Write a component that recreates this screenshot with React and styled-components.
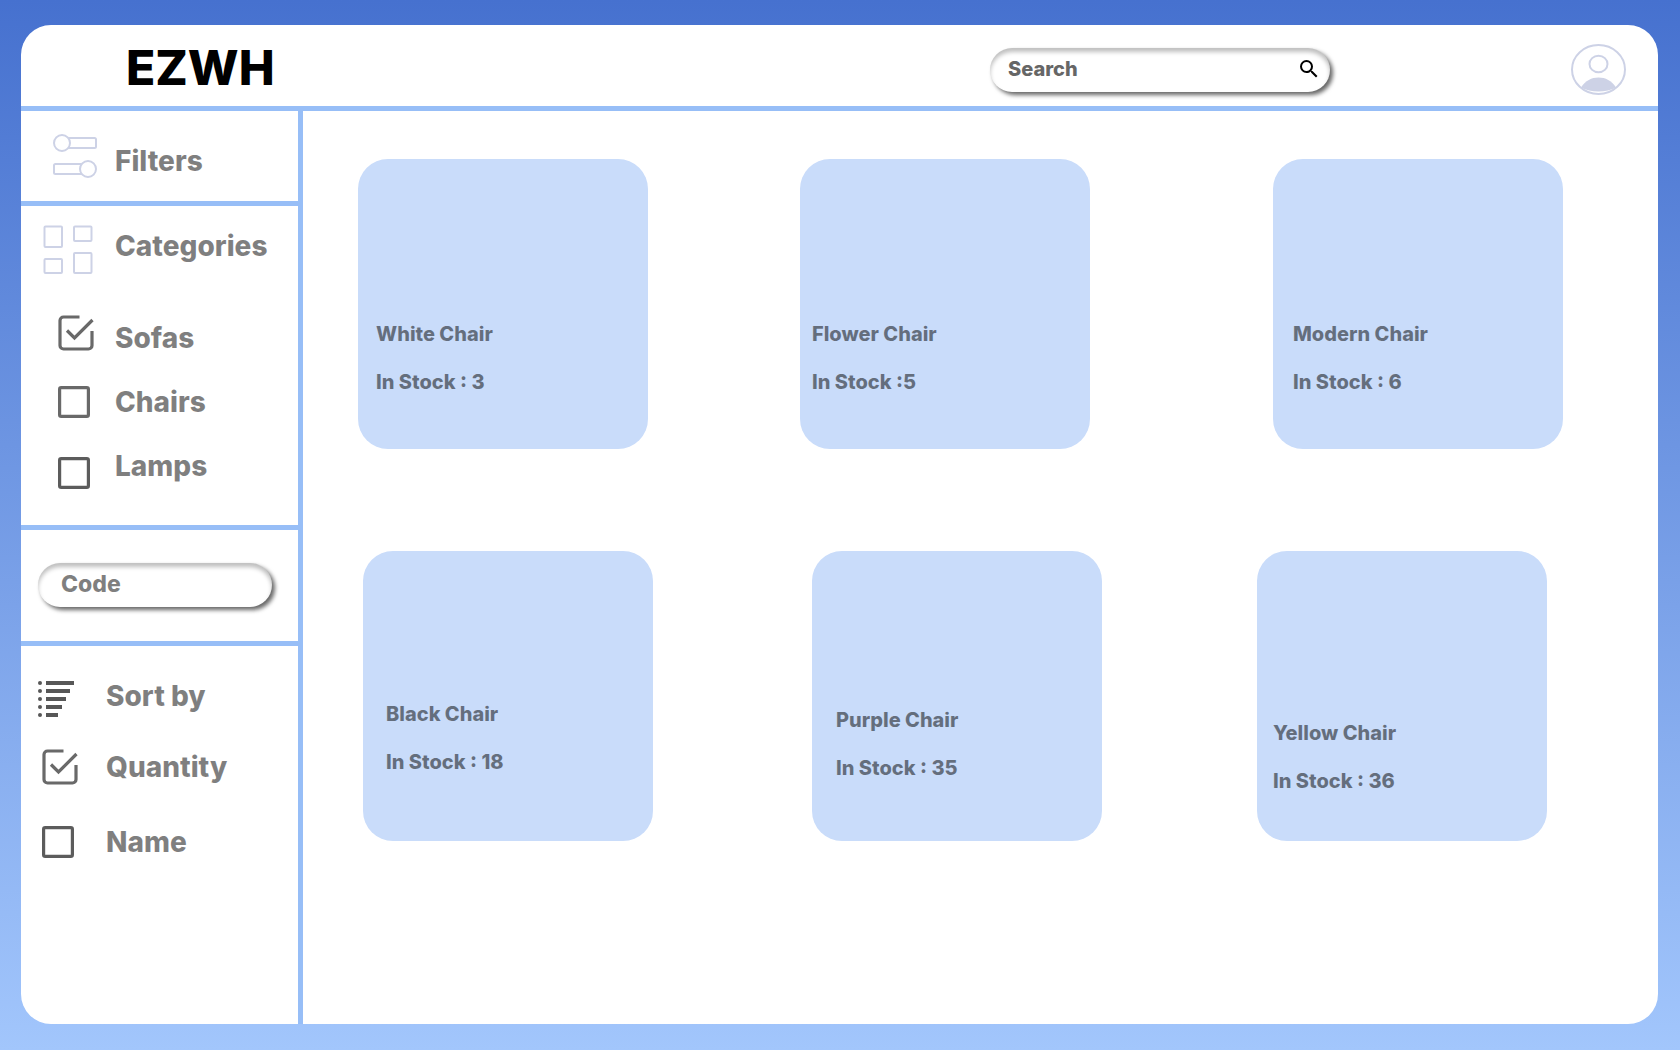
import React, { useState } from "react";
import styled, { createGlobalStyle } from "styled-components";

const GlobalStyle = createGlobalStyle`
  *, *::before, *::after { box-sizing: border-box; }
  body { margin: 0; font-family: Inter, "Liberation Sans", sans-serif; }
  h1, h2, h3, p, ul { margin: 0; padding: 0; }
  ul { list-style: none; }
`;

const line = "#97bef7";
const outline = "#cdd2e6";
const muted = "rgba(0, 0, 0, 0.5)";

const Page = styled.div`
  display: flex;
  min-height: 100vh;
  padding: 25px 22px 26px 21px;
  background: linear-gradient(180deg, #4671cf 0%, #a2c6fc 100%);
`;

const Panel = styled.div`
  flex: 1;
  display: flex;
  flex-direction: column;
  overflow: hidden;
  border-radius: 30px;
  background: #fff;
`;

const Header = styled.header`
  display: grid;
  grid-template-columns: 1fr 340px 296px;
  align-items: center;
  height: 86px;
  padding: 8px 32px 0 105px;
  border-bottom: 5px solid ${line};
`;

const Logo = styled.h1`
  padding-bottom: 4px;
  font-size: 48px;
  line-height: 58px;
  font-weight: 800;
  color: #000;
`;

const Pill = styled.div`
  display: flex;
  align-items: center;
  height: 44px;
  padding: 0 9px 2px ${(p) => p.$inset}px;
  border-radius: 22px;
  background: #fff;
  box-shadow: 3px 3px 4px rgba(0, 0, 0, 0.6),
    inset 0 4px 4px rgba(0, 0, 0, 0.25);
`;

const TextInput = styled.input`
  flex: 1;
  min-width: 0;
  padding: 0;
  border: 0;
  outline: 0;
  background: transparent;
  font: 800 ${(p) => p.$size}px / 28px Inter, "Liberation Sans", sans-serif;
  color: ${(p) => p.$color};

  &::placeholder {
    color: inherit;
    opacity: 1;
  }
`;

const IconButton = styled.button`
  display: flex;
  padding: 0;
  border: 0;
  background: none;
  color: #000;
  cursor: pointer;
`;

const AvatarButton = styled(IconButton)`
  justify-self: end;
`;

const Body = styled.div`
  flex: 1;
  display: flex;
`;

const Sidebar = styled.aside`
  flex: none;
  width: 282px;
  border-right: 5px solid ${line};
`;

const Section = styled.section`
  padding: ${(p) => p.$pad};
  border-bottom: ${(p) => (p.$last ? "0" : `5px solid ${line}`)};
`;

const Heading = styled.div`
  display: flex;
  height: ${(p) => p.$height}px;
`;

const IconCell = styled.span`
  flex: none;
  display: flex;
  align-self: ${(p) => p.$align};
  width: ${(p) => p.$width}px;
  padding-left: ${(p) => p.$indent}px;
`;

const Title = styled.h2`
  align-self: ${(p) => p.$align};
  font-size: 28px;
  line-height: 42px;
  font-weight: 800;
  color: ${muted};
`;

const Options = styled.ul`
  display: flex;
  flex-direction: column;
  gap: ${(p) => p.$gap}px;
  padding-top: ${(p) => p.$top}px;
`;

const OptionLabel = styled.label`
  display: flex;
  height: 44px;
  cursor: pointer;
`;

const OptionText = styled.span`
  align-self: ${(p) => p.$align};
  font-size: 28px;
  line-height: 42px;
  font-weight: 800;
  color: ${muted};
`;

const CheckBox = styled.span`
  position: relative;
  display: flex;
`;

const HiddenCheck = styled.input`
  position: absolute;
  inset: 0;
  width: 100%;
  height: 100%;
  margin: 0;
  opacity: 0;
  cursor: pointer;
`;

const Products = styled.main`
  flex: 1;
  display: flex;
  flex-direction: column;
  gap: 102px;
  padding: 48px 0;
`;

const Shelf = styled.ul`
  display: grid;
  grid-template-columns: ${(p) => p.$columns};
  padding: ${(p) => p.$pad};
`;

const Card = styled.li`
  display: flex;
  flex-direction: column;
  gap: 24px;
  width: 290px;
  height: 290px;
  padding: ${(p) => p.$top}px 12px 0 ${(p) => p.$left}px;
  border-radius: 30px;
  background: #c9dcfa;
  font-size: 20px;
  line-height: 24px;
  font-weight: 800;
  color: ${muted};
`;

const CardName = styled.h3`
  font-size: 20px;
  line-height: 24px;
  font-weight: 800;
`;

const SearchIcon = () => (
  <svg width="24" height="24" viewBox="0 0 24 24" fill="currentColor" aria-hidden="true">
    <path d="M15.5 14h-.79l-.28-.27A6.47 6.47 0 0 0 16 9.5 6.5 6.5 0 1 0 9.5 16c1.61 0 3.09-.59 4.23-1.57l.27.28v.79l5 4.99L20.49 19l-4.99-5zm-6 0C7.01 14 5 11.99 5 9.5S7.01 5 9.5 5 14 7.01 14 9.5 11.99 14 9.5 14z" />
  </svg>
);

const AvatarIcon = () => (
  <svg width="55" height="51" viewBox="0 0 55 51" fill="none" stroke={outline} strokeWidth="2" aria-hidden="true">
    <ellipse cx="27.5" cy="25.5" rx="26.5" ry="24.5" />
    <ellipse cx="27.5" cy="20" rx="9" ry="8.3" />
    <path d="M10 43.5C14.5 36.5 20.5 33.5 27.5 33.5S40.5 36.5 45 43.5C40 46.3 34 47.6 27.5 47.6S15 46.3 10 43.5Z" fill={outline} stroke="none" />
  </svg>
);

const FiltersIcon = () => (
  <svg width="44" height="44" viewBox="0 0 44 44" fill="#fff" stroke={outline} strokeWidth="2" aria-hidden="true">
    <rect x="9" y="4" width="34" height="10" rx="1.5" />
    <circle cx="9" cy="9" r="8" />
    <rect x="1" y="30" width="34" height="10" rx="1.5" />
    <circle cx="35" cy="35" r="8" />
  </svg>
);

const CategoriesIcon = () => (
  <svg width="50" height="50" viewBox="0 0 50 50" fill="none" stroke={outline} strokeWidth="2" aria-hidden="true">
    <rect x="1.5" y="1.5" width="17.5" height="20.5" rx="1" />
    <rect x="31" y="1.5" width="17.5" height="14.5" rx="1" />
    <rect x="1.5" y="34" width="17.5" height="14" rx="1" />
    <rect x="31" y="28" width="17.5" height="20" rx="1" />
  </svg>
);

const SortIcon = () => (
  <svg width="36" height="36" viewBox="0 0 36 36" fill="#575757" aria-hidden="true">
    {[28, 24, 20, 16, 12].map((w, i) => (
      <g key={w}>
        <circle cx="2" cy={2 + i * 8} r="2" />
        <rect x="8" y={i * 8} width={w} height="4" />
      </g>
    ))}
  </svg>
);

const CheckedIcon = () => (
  <svg width="36" height="36" viewBox="0 0 36 36" fill="none" stroke="#696969" strokeWidth="3.2" aria-hidden="true">
    <path d="M21.5 2H5.5A3.5 3.5 0 0 0 2 5.5V30.5A3.5 3.5 0 0 0 5.5 34H30.5A3.5 3.5 0 0 0 34 30.5V16" />
    <path d="M9 15.5L16.5 23L34.5 5" />
  </svg>
);

const UncheckedIcon = ({ color }) => (
  <svg width="32" height="32" viewBox="0 0 32 32" fill="none" stroke={color} strokeWidth="3.2" aria-hidden="true">
    <rect x="1.6" y="1.6" width="28.8" height="28.8" rx="1.6" />
  </svg>
);

function Option({ text, initial = false, width, indent, iconAlign = "center", textAlign = "center", color = "#5c5c5c" }) {
  const [checked, setChecked] = useState(initial);
  return (
    <li>
      <OptionLabel>
        <IconCell $width={width} $indent={indent} $align={iconAlign}>
          <CheckBox>
            <HiddenCheck type="checkbox" checked={checked} onChange={(e) => setChecked(e.target.checked)} />
            {checked ? <CheckedIcon /> : <UncheckedIcon color={color} />}
          </CheckBox>
        </IconCell>
        <OptionText $align={textAlign}>{text}</OptionText>
      </OptionLabel>
    </li>
  );
}

const shelves = [
  {
    columns: "442fr 473fr 290px",
    pad: "0 95px 0 55px",
    items: [
      { name: "White Chair", stock: "In Stock : 3", top: 163, left: 18 },
      { name: "Flower Chair", stock: "In Stock :5", top: 163, left: 12 },
      { name: "Modern Chair", stock: "In Stock : 6", top: 163, left: 20 },
    ],
  },
  {
    columns: "449fr 445fr 290px",
    pad: "0 111px 0 60px",
    items: [
      { name: "Black Chair", stock: "In Stock : 18", top: 151, left: 23 },
      { name: "Purple Chair", stock: "In Stock : 35", top: 157, left: 24 },
      { name: "Yellow Chair", stock: "In Stock : 36", top: 170, left: 16 },
    ],
  },
];

export default function App() {
  return (
    <>
      <GlobalStyle />
      <Page>
        <Panel>
          <Header>
            <Logo>EZWH</Logo>
            <Pill as="form" role="search" $inset={18} onSubmit={(e) => e.preventDefault()}>
              <TextInput type="text" placeholder="Search" aria-label="Search" $size={20} $color="#666" />
              <IconButton type="submit" aria-label="Submit search">
                <SearchIcon />
              </IconButton>
            </Pill>
            <AvatarButton type="button" aria-label="Account">
              <AvatarIcon />
            </AvatarButton>
          </Header>
          <Body>
            <Sidebar>
              <Section $pad="23px 0 19px">
                <Heading $height={48}>
                  <IconCell $width={94} $indent={32} $align="flex-start">
                    <FiltersIcon />
                  </IconCell>
                  <Title $align="flex-end">Filters</Title>
                </Heading>
              </Section>
              <Section $pad="19px 0 36px">
                <Heading $height={50}>
                  <IconCell $width={94} $indent={22} $align="flex-start">
                    <CategoriesIcon />
                  </IconCell>
                  <Title $align="flex-start">Categories</Title>
                </Heading>
                <Options $gap={21} $top={40}>
                  <Option text="Sofas" initial width={94} indent={37} iconAlign="flex-start" textAlign="flex-end" />
                  <Option text="Chairs" width={94} indent={37} color="#696969" />
                  <Option text="Lamps" width={94} indent={37} iconAlign="flex-end" textAlign="flex-start" />
                </Options>
              </Section>
              <Section $pad="33px 26px 34px 17px">
                <Pill $inset={23}>
                  <TextInput type="text" placeholder="Code" aria-label="Code" $size={23} $color={muted} />
                </Pill>
              </Section>
              <Section $pad="29px 0 36px" $last>
                <Heading $height={42}>
                  <IconCell $width={85} $indent={17} $align="flex-end">
                    <SortIcon />
                  </IconCell>
                  <Title $align="flex-start">Sort by</Title>
                </Heading>
                <Options $gap={31} $top={28}>
                  <Option text="Quantity" initial width={85} indent={21} />
                  <Option text="Name" width={85} indent={21} />
                </Options>
              </Section>
            </Sidebar>
            <Products>
              {shelves.map((shelf) => (
                <Shelf key={shelf.columns} $columns={shelf.columns} $pad={shelf.pad}>
                  {shelf.items.map((item) => (
                    <Card key={item.name} $top={item.top} $left={item.left}>
                      <CardName>{item.name}</CardName>
                      <p>{item.stock}</p>
                    </Card>
                  ))}
                </Shelf>
              ))}
            </Products>
          </Body>
        </Panel>
      </Page>
    </>
  );
}
